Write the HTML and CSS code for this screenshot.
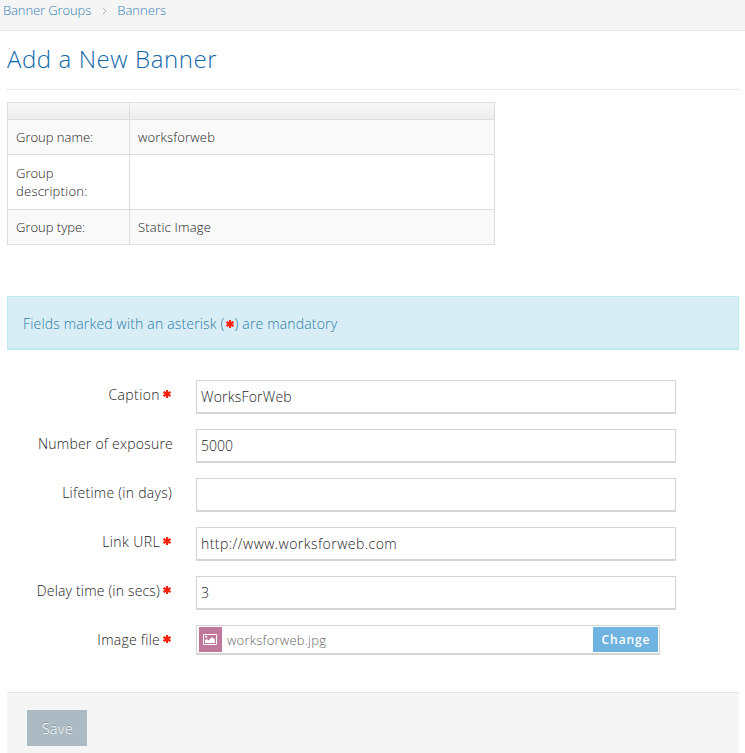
FILE: index.html
```
<!DOCTYPE html>
<html lang="en">
<head>
<meta charset="utf-8">
<title>Add a New Banner</title>
<link rel="stylesheet" href="styles.css">
</head>
<body>
<svg class="defs" aria-hidden="true"><symbol id="star" viewBox="0 0 8 8"><path d="M4 0v8M.5 2l7 4M.5 6l7-4" stroke="#f8200c" stroke-width="2.1"/></symbol></svg>
<nav class="breadcrumbs">
  <a class="crumb-groups">Banner Groups</a>
  <svg class="chevron" viewBox="0 0 5 8"><path d="M.7.7 4 4 .7 7.3" fill="none" stroke="#b2b6bf"/></svg>
  <a class="crumb-banners">Banners</a>
</nav>
<main class="page">
  <h1><span>Add a New Banner</span></h1>
  <table class="info">
    <thead><tr><th></th><th></th></tr></thead>
    <tbody>
      <tr><td><span>Group name:</span></td><td><span class="t-works">worksforweb</span></td></tr>
      <tr class="tall"><td><span>Group<br></span><span class="t-desc">description:</span></td><td></td></tr>
      <tr><td><span>Group type:</span></td><td><span class="t-static">Static Image</span></td></tr>
    </tbody>
  </table>
  <div class="alert"><span>Fields marked with an asterisk (<svg class="star"><use href="#star"/></svg>) are mandatory</span></div>
  <form class="form">
    <div class="row"><label><span class="l-caption">Caption</span><svg class="star"><use href="#star"/></svg></label><div class="field"><span class="v-caption">WorksForWeb</span></div></div>
    <div class="row"><label><span class="l-number">Number of exposure</span></label><div class="field"><span>5000</span></div></div>
    <div class="row"><label><span class="l-life">Lifetime (in days)</span></label><div class="field"></div></div>
    <div class="row"><label><span class="l-link">Link URL</span><svg class="star"><use href="#star"/></svg></label><div class="field"><span class="v-link">http://www.worksforweb.com</span></div></div>
    <div class="row"><label><span class="l-delay">Delay time (in secs)</span><svg class="star"><use href="#star"/></svg></label><div class="field"><span>3</span></div></div>
    <div class="row"><label><span class="l-image">Image file</span><svg class="star"><use href="#star"/></svg></label>
      <div class="file">
        <span class="thumb"><svg viewBox="0 0 14 11"><path d="M.5.5h13v10H.5z" fill="none" stroke="#fff"/><path d="M2 9V6l2-1 1.5 1.5L9 3l1 1.5L11 4l1 2v3z" fill="#fff"/><circle cx="3.3" cy="2.8" r="1.1" fill="#fff"/></svg></span>
        <span class="filename">worksforweb.jpg</span>
        <span class="change">Change</span>
      </div>
    </div>
  </form>
  <footer class="actions"><button type="button"><span>Save</span></button></footer>
</main>
</body>
</html>
```
FILE: styles.css
```
* { box-sizing: border-box; }
html, body { height: 100%; }
body { margin: 0; overflow: hidden; background: #fff; color: #1c1c1c; font: 300 14px/20px "Open Sans", sans-serif; }
.defs { display: none; }
span, a { white-space: nowrap; }
.breadcrumbs { height: 31px; padding: 0 0 11px 3px; display: flex; align-items: center; background: #f5f5f5; border-bottom: 1px solid #e5e5e5; color: #337fb4; font-size: 13px; }
.crumb-groups { letter-spacing: -.1px; }
.crumb-banners { letter-spacing: .05px; }
.chevron { width: 5px; height: 8px; margin: 3px 10px 0 11px; }
.page { margin: 0 6px 0 7px; }
h1 { margin: 0 0 12px; height: 59px; padding-top: 11px; border-bottom: 1px dotted #ddd; font-size: 24px; line-height: 34px; font-weight: 300; letter-spacing: .58px; color: #1268aa; }
.info { width: 488px; table-layout: fixed; border-collapse: collapse; font-size: 13px; line-height: 18px; }
.info th, .info td { border: 1px solid #ddd; padding: 0 8px; text-align: left; }
.info th:first-child { width: 122px; }
.info th { height: 17px; }
.info thead tr { background: linear-gradient(#f8f8f8, #ececec); }
.info td { height: 35px; }
.info .tall td { height: 55px; }
.info tbody tr:nth-child(odd) { background: #f9f9f9; }
.t-works { letter-spacing: .16px; }
.t-desc { letter-spacing: .25px; }
.t-static { letter-spacing: .2px; }
.alert { height: 54px; margin-top: 51px; padding: 17px 15px 0; background: #d9edf7; border: 1px solid #bce8f1; border-bottom-width: 2px; color: #2a7da6; letter-spacing: .17px; }
.star { width: 8px; height: 8px; }
.alert .star { margin: 0 1px; vertical-align: 1px; }
.form { padding-top: 30px; }
.row { height: 49px; display: flex; }
label { width: 166px; height: 30px; margin-right: 23px; display: flex; align-items: center; justify-content: flex-end; }
label .star { margin: 0 2px 2px 3px; }
.l-caption { letter-spacing: .4px; }
.l-number { letter-spacing: .22px; }
.l-life { letter-spacing: .26px; padding-right: 1px; }
.l-link { letter-spacing: .4px; }
.l-delay { letter-spacing: .17px; }
.l-image { letter-spacing: .25px; }
.v-caption { letter-spacing: .2px; }
.v-link { letter-spacing: .46px; }
.field { width: 480px; height: 34px; padding: 6px 4px; border: 1px solid #d5d5d5; border-bottom-width: 2px; }
.file { width: 464px; height: 30px; padding: 1px 1px 1px 2px; display: flex; align-items: center; border: 1px solid #d5d5d5; border-bottom-width: 2px; color: #666; font-size: 13px; }
.thumb { width: 23px; height: 25px; margin-right: 5px; padding: 7px 0 0 4px; background: #bf789b; }
.thumb svg { display: block; width: 14px; height: 11px; }
.filename { padding-top: 1px; letter-spacing: .22px; }
.change { width: 65px; height: 25px; margin-left: auto; padding-left: 1px; text-align: center; line-height: 25px; color: #fff; background: #6fb3e0; font-size: 12px; font-weight: 600; letter-spacing: .9px; }
.actions { height: 80px; margin-top: 18px; padding: 17px 20px; background: #f5f5f5; border-top: 1px solid #e5e5e5; }
button { width: 60px; height: 36px; padding: 1px 0 0 1px; border: 0; background: #abbac3; color: #fff; font: 300 14px/35px "Open Sans", sans-serif; letter-spacing: .5px; text-shadow: 0 -1px 0 rgba(0,0,0,.25); }
```
